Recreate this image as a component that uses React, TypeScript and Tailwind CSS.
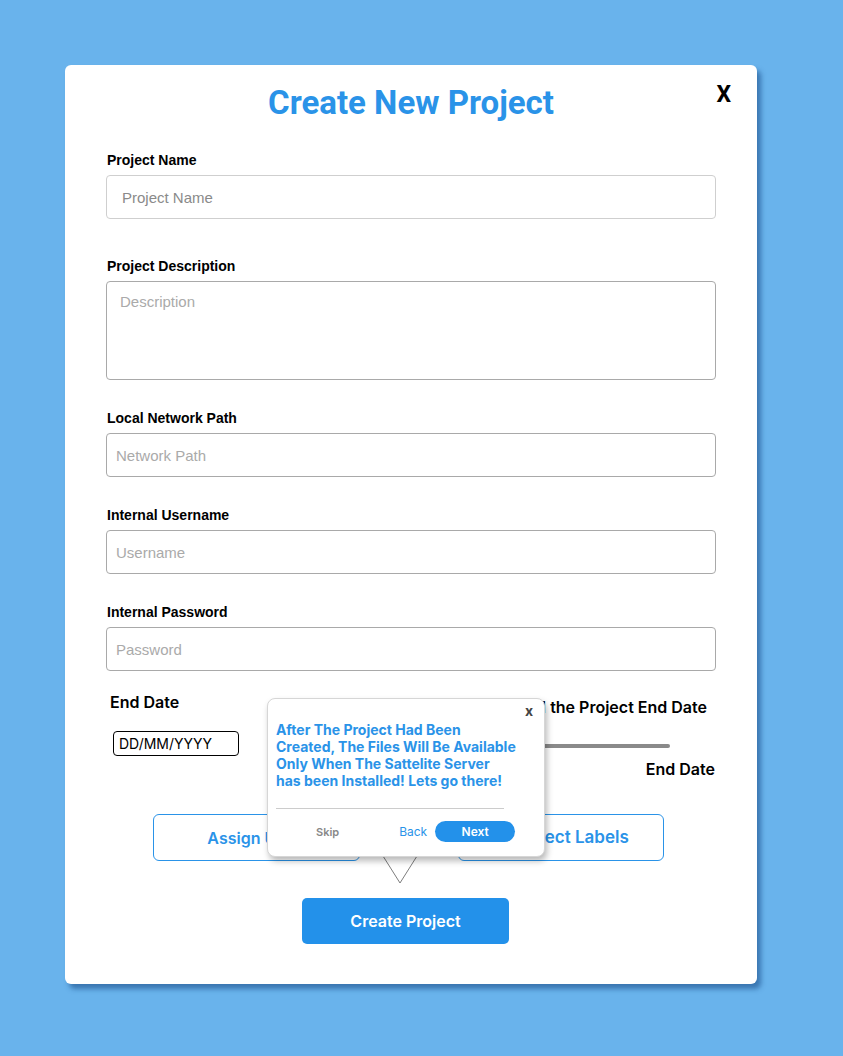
export default function App() {
  const fields = [
    { label: 'Internal Username', placeholder: 'Username' },
    { label: 'Internal Password', placeholder: 'Password' },
  ]

  return (
    <div className="min-h-[1056px] w-full bg-[#69b3ec] pt-[65px] pl-[65px] font-['Inter',sans-serif]">
      <div className="relative w-[692px] rounded-[6px] bg-white px-[41px] pt-[20px] pb-[40px] shadow-[4px_5px_5px_rgba(20,70,130,0.55)]">
        {/* Header */}
        <div className="relative">
          <h1 className="text-center font-['Roboto',sans-serif] text-[33px] font-bold leading-[36px] text-[#2a93e8]">
            Create New Project
          </h1>
          <span className="absolute right-[-15px] top-[-4px] font-['Roboto',sans-serif] text-[23px] font-bold leading-[28px] text-black">
            X
          </span>
        </div>

        {/* Project name */}
        <label className="mt-[31px] mb-[7px] block pl-[1px] font-['Liberation_Sans',sans-serif] text-[14px] font-bold leading-[16px] text-black">
          Project Name
        </label>
        <input
          className="block h-[44px] w-full rounded-[4px] border border-[#cfcfcf] px-[15px] font-['Liberation_Sans',sans-serif] text-[15px] outline-none placeholder:text-[#8a8a8a]"
          placeholder="Project Name"
        />

        {/* Description */}
        <label className="mt-[39px] mb-[7px] block pl-[1px] font-['Liberation_Sans',sans-serif] text-[14px] font-bold leading-[16px] text-black">
          Project Description
        </label>
        <textarea
          className="block h-[99px] w-full resize-none rounded-[4px] border border-[#a9a9a9] px-[13px] py-[11px] font-['Liberation_Sans',sans-serif] text-[15px] leading-[18px] outline-none placeholder:text-[#aaaaaa]"
          placeholder="Description"
        />

        {/* Network path */}
        <label className="mt-[30px] mb-[7px] block pl-[1px] font-['Liberation_Sans',sans-serif] text-[14px] font-bold leading-[16px] text-black">
          Local Network Path
        </label>
        <input
          className="block h-[44px] w-full rounded-[4px] border border-[#a9a9a9] px-[9px] font-['Liberation_Sans',sans-serif] text-[15px] outline-none placeholder:text-[#aaaaaa]"
          placeholder="Network Path"
        />

        {fields.map((f) => (
          <div key={f.label}>
            <label className="mt-[30px] mb-[7px] block pl-[1px] font-['Liberation_Sans',sans-serif] text-[14px] font-bold leading-[16px] text-black">
              {f.label}
            </label>
            <input
              className="block h-[44px] w-full rounded-[4px] border border-[#a9a9a9] px-[9px] font-['Liberation_Sans',sans-serif] text-[15px] outline-none placeholder:text-[#aaaaaa]"
              placeholder={f.placeholder}
            />
          </div>
        ))}

        {/* Dates */}
        <div className="mt-[21px] flex justify-between">
          <div className="ml-[4px]">
            <p className="text-[16px] font-semibold leading-[20px] text-black">End Date</p>
            <div className="mt-[19px] ml-[3px] flex h-[25px] w-[126px] items-center rounded-[4px] border border-black px-[5px] text-[14px] leading-[16px] text-black">
              DD/MM/YYYY
            </div>
          </div>
          <div className="flex flex-col items-end pt-[5px]">
            <p className="mr-[9px] text-[16px] font-semibold leading-[20px] text-black">
              Pick and Add the Project End Date
            </p>
            <div className="mt-[27px] mr-[46px] h-[4px] w-[150px] rounded-full bg-[#8a8a8a]" />
            <p className="mt-[11px] mr-[1px] text-[16px] font-semibold leading-[20px] text-black">End Date</p>
          </div>
        </div>

        {/* Assign / labels */}
        <div className="mt-[35px] flex justify-center gap-[98px] pr-[5px]">
          <button className="h-[47px] w-[207px] rounded-[6px] border border-[#2a93e8] pl-[4px] text-[16px] font-semibold text-[#2a93e8]">
            Assign Users
          </button>
          <button className="h-[47px] w-[206px] rounded-[6px] border border-[#2a93e8] pl-[26px] text-[17px] font-semibold text-[#2a93e8]">
            Select Labels
          </button>
        </div>

        <div className="mt-[37px] flex justify-center pr-[11px]">
          <button className="h-[46px] w-[207px] rounded-[5px] bg-[#2391ea] text-[16px] font-semibold text-white">
            Create Project
          </button>
        </div>

        {/* Tour pointer */}
        <svg
          className="absolute left-[317px] top-[790px]"
          width="36"
          height="30"
          viewBox="0 0 36 30"
        >
          <path d="M1 1 L18 28 L35 1" fill="white" stroke="#7d7d7d" strokeWidth="1" />
        </svg>

        {/* Tour popup */}
        <div className="absolute left-[202px] top-[633px] h-[159px] w-[278px] rounded-[8px] border border-[#d6d6d6] bg-white pl-[8px] pt-[22px] shadow-[2px_4px_6px_rgba(0,0,0,0.28)]">
          <span className="absolute right-[11px] top-[3px] text-[14px] font-bold leading-[18px] text-[#444]">x</span>
          <p className="text-[14px] font-bold leading-[17px] text-[#2a93e8]">
            After The Project Had Been
            <br />
            Created, The Files Will Be Available
            <br />
            Only When The Sattelite Server
            <br />
            has been Installed! Lets go there!
          </p>
          <div className="mt-[19px] h-px w-[228px] bg-[#cccccc]" />
          <div className="mt-[12px] flex items-center">
            <span className="ml-[40px] text-[11px] font-semibold leading-[14px] text-[#888]">Skip</span>
            <span className="ml-[60px] text-[12px] leading-[14px] text-[#2a93e8]">Back</span>
            <span className="ml-[8px] flex h-[21px] w-[80px] items-center justify-center rounded-full bg-[#2391ea] text-[12px] font-semibold text-white">
              Next
            </span>
          </div>
        </div>
      </div>
    </div>
  )
}
